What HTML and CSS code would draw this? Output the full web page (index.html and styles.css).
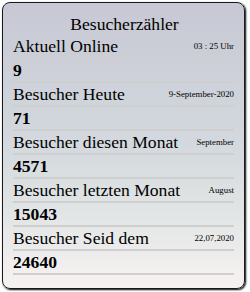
FILE: index.html
```html
<!DOCTYPE html>
<html>
<head>
    <meta charset="utf-8">
    <meta name="viewport" content="width=device-width, initial-scale=1">
    <title>Besucherzähler</title>
    <link rel="stylesheet" href="styles.css">
</head>
<body>
    <div class="counter">
        <div class="title">Besucherzähler</div>

        <div class="row">
            <span class="label">Aktuell Online</span>
            <span class="info">03 : 25 Uhr</span>
        </div>
        <div class="row value">9</div>

        <div class="row">
            <span class="label">Besucher Heute</span>
            <span class="info">9-September-2020</span>
        </div>
        <div class="row value">71</div>

        <div class="row">
            <span class="label">Besucher diesen Monat</span>
            <span class="info">September</span>
        </div>
        <div class="row value">4571</div>

        <div class="row">
            <span class="label">Besucher letzten Monat</span>
            <span class="info">August</span>
        </div>
        <div class="row value">15043</div>

        <div class="row">
            <span class="label">Besucher Seid dem</span>
            <span class="info">22,07,2020</span>
        </div>
        <div class="row value">24640</div>
    </div>
</body>
</html>
```

FILE: styles.css
```css
body {
    margin: 0;
    padding: 2px;
    background-color: #fff;
    font-family: "Liberation Serif", serif;
    color: #000;
}

.counter {
    width: 221px;
    height: 265px;
    padding: 10px;
    border: 1px solid #1a1a1a;
    border-radius: 8px;
    box-shadow: 1px 1px 2px #000;
    background: linear-gradient(to bottom, #c7c8d4 0%, #d3d9de 50%, #dfe3e3 70%, #f7f2f2 100%);
}

.title {
    text-align: center;
    font-size: 17.6px;
    line-height: 22px;
    padding-left: 2px;
}

.row {
    display: flex;
    justify-content: space-between;
    align-items: center;
    font-size: 17.6px;
    line-height: 22px;
    border-bottom: 2px solid #cfcfcf;
}

.value {
    font-weight: bold;
}

.info {
    font-size: 8.8px;
    line-height: 10px;
}
```
